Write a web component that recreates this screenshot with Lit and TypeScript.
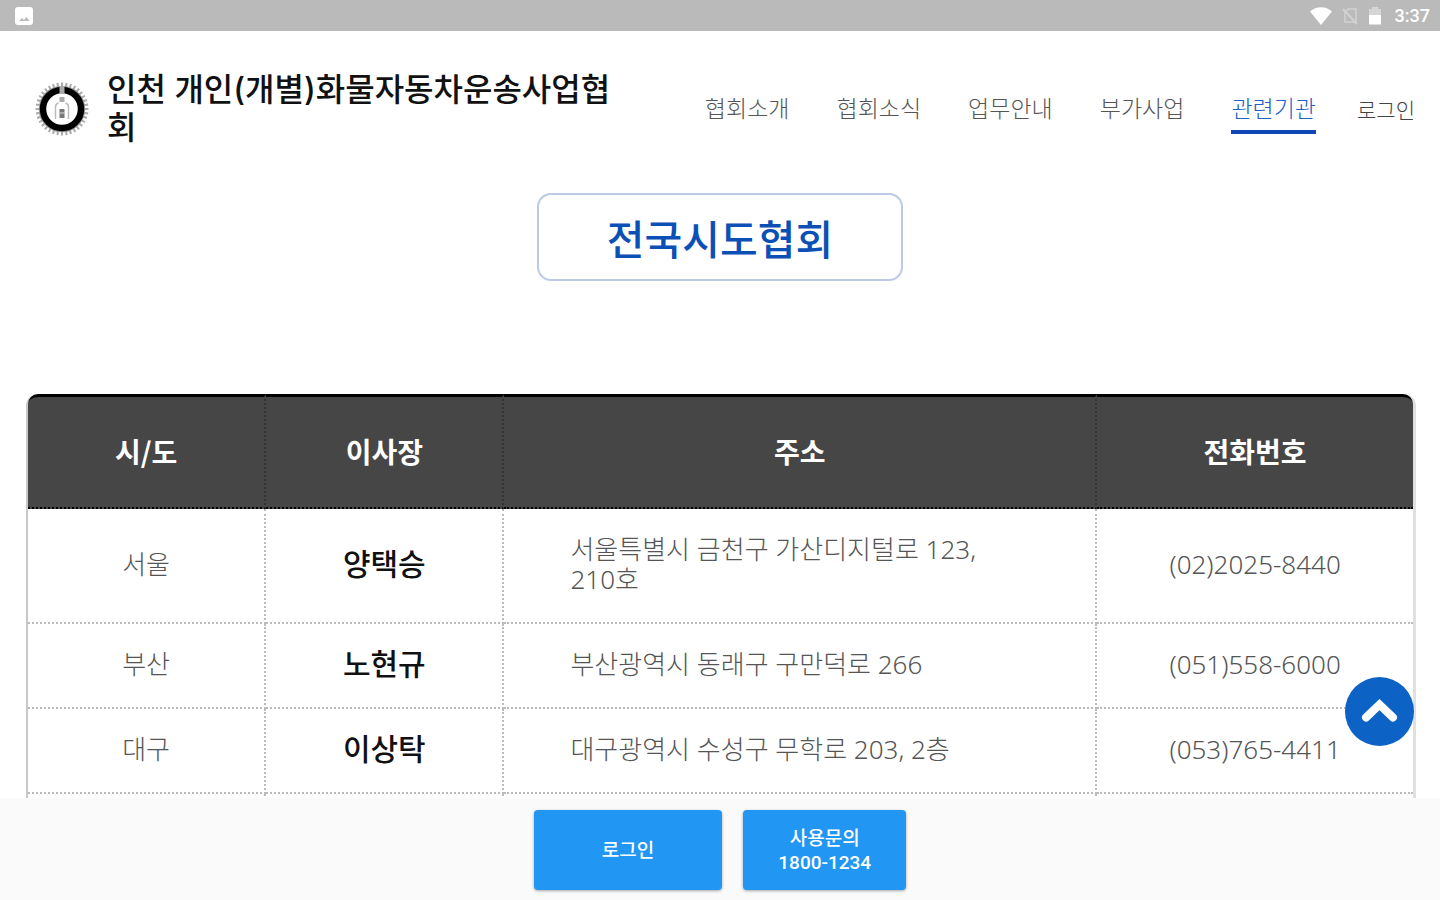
import { LitElement, html, css, svg } from "lit";
import { customElement } from "lit/decorators.js";
import { classMap } from "lit/directives/class-map.js";

interface Association {
  region: string;
  chairman: string;
  address: string;
  phone: string;
}

const MENU = ["협회소개", "협회소식", "업무안내", "부가사업", "관련기관"];
const ACTIVE = "관련기관";

const ASSOCIATIONS: Association[] = [
  { region: "서울", chairman: "양택승", address: "서울특별시 금천구 가산디지털로 123, 210호", phone: "(02)2025-8440" },
  { region: "부산", chairman: "노현규", address: "부산광역시 동래구 구만덕로 266", phone: "(051)558-6000" },
  { region: "대구", chairman: "이상탁", address: "대구광역시 수성구 무학로 203, 2층", phone: "(053)765-4411" },
];

@customElement("status-bar")
export class StatusBar extends LitElement {
  static styles = css`
    :host {
      display: flex;
      align-items: center;
      flex: none;
      height: 31px;
      padding: 0 10px 0 15px;
      background: #bababa;
      color: #fff;
      font: 500 18px/22px Roboto, sans-serif;
    }
    .picture { width: 18px; height: 18px; }
    .right { display: flex; align-items: center; gap: 9px; margin-left: auto; }
    .wifi { width: 22px; height: 18px; }
    .sim { width: 18px; height: 18px; }
    .battery { width: 14px; height: 20px; }
    .time { margin-left: 4px; }
  `;
  render() {
    return html`
      <svg class="picture" viewBox="0 0 18 18" aria-hidden="true">
        <rect width="18" height="18" rx="3" fill="#fff" />
        <path d="M4 14l3-3 2 2 2.500-3 3 4z" fill="#bababa" />
      </svg>
      <div class="right">
        <svg class="wifi" viewBox="0 0 22 18" aria-hidden="true">
          <path d="M0 4.500C6-1.200 16-1.200 22 4.500L11 18z" fill="#fff" />
        </svg>
        <svg class="sim" viewBox="0 0 18 18" aria-hidden="true">
          <path d="M7 2h8v13H4V6z" fill="none" stroke="#d2d2d2" stroke-width="1.500" />
          <path d="M2 2l14 15" stroke="#d2d2d2" stroke-width="2" />
        </svg>
        <svg class="battery" viewBox="0 0 14 20" aria-hidden="true">
          <path d="M4 1h6v2h3v8H1V3h3z" fill="#d6d6d6" />
          <path d="M1 9h12v9.500H1z" fill="#fff" />
        </svg>
        <span class="time">3:37</span>
      </div>
    `;
  }
}

@customElement("site-header")
export class SiteHeader extends LitElement {
  static styles = css`
    :host {
      display: flex;
      align-items: center;
      padding: 40px 25px 0 35px;
    }
    .brand {
      display: flex;
      align-items: center;
      gap: 18px;
      flex: 0 1 592px;
      color: #111;
      text-decoration: none;
    }
    .logo { flex: none; width: 54px; height: 54px; }
    .name {
      font-family: Inter, "Noto Sans CJK KR", sans-serif;
      font-size: 32px;
      line-height: 38px;
      font-weight: 500;
      word-break: break-all;
    }
    .menu { display: flex; align-items: center; gap: 47px; margin-left: auto; }
    .link {
      padding: 4px 0;
      border-bottom: 4px solid transparent;
      color: #555;
      font-size: 23px;
      line-height: 38px;
      font-weight: 300;
      text-decoration: none;
      white-space: nowrap;
    }
    .active { border-color: #0f47b5; color: #2160c4; }
    .login {
      margin-left: 41px;
      color: #444;
      font-size: 21px;
      line-height: 38px;
      font-weight: 300;
      text-decoration: none;
      white-space: nowrap;
    }
  `;
  render() {
    const ring = Array.from({ length: 36 }, (_, i) => i * 10);
    return html`
      <a class="brand" href="#">
        <svg class="logo" viewBox="0 0 54 54" aria-hidden="true">
          ${ring.map(
            (a) => svg`<path d="M27 .5v4.500" stroke="#aaa" stroke-width="2" transform="rotate(${a} 27 27)" />`
          )}
          <circle cx="27" cy="27" r="22.500" fill="none" stroke="#999" stroke-width="1.500" />
          <circle cx="27" cy="27" r="19" fill="none" stroke="#000" stroke-width="6.500" />
          <path d="M24.500 4h5v8h-5z" fill="#aaa" />
          <path d="M24.500 15h5v5h-5z" fill="#aaa" />
          <path d="M20.500 37V25q0-3 3-4M33.500 37V25q0-3-3-4" fill="none" stroke="#bbb" stroke-width="1.500" />
          <path d="M24.500 27h5v9h-5z" fill="#777" />
          <path d="M24.500 31h5" stroke="#ddd" />
        </svg>
        <span class="name">인천 개인(개별)화물자동차운송사업협회</span>
      </a>
      <nav class="menu">
        ${MENU.map(
          (item) => html`<a href="#" class=${classMap({ link: true, active: item === ACTIVE })}>${item}</a>`
        )}
      </nav>
      <a class="login" href="#">로그인</a>
    `;
  }
}

@customElement("association-table")
export class AssociationTable extends LitElement {
  static styles = css`
    :host { display: block; padding: 0 24px 0 26px; }
    .table {
      width: 100%;
      table-layout: fixed;
      border-collapse: separate;
      border-spacing: 0;
      border-left: 2px solid #c8c8c8;
      border-right: 3px solid #e0e0e0;
      border-radius: 12px 12px 0 0;
    }
    .narrow { width: 17.2%; }
    .wide { width: 42.8%; }
    .head {
      height: 115px;
      box-sizing: border-box;
      padding: 0 0 2px;
      background: #464646;
      border-top: 3px solid #000;
      border-bottom: 2px dotted #000;
      border-right: 2px dotted #333;
      color: #fff;
      font-size: 28px;
      line-height: 36px;
      font-weight: 700;
    }
    .head:first-child { border-top-left-radius: 10px; }
    .head:last-child { border-top-right-radius: 10px; border-right: 0; }
    .cell {
      padding: 25px 66px 28px;
      border-bottom: 2px dotted #bbb;
      border-right: 2px dotted #bbb;
      color: #555;
      font-family: "Noto Sans", "Noto Sans CJK KR", sans-serif;
      font-size: 26px;
      line-height: 30px;
      font-weight: 300;
      text-align: left;
      word-break: keep-all;
    }
    .cell:last-child { border-right: 0; }
    .center { padding-left: 0; padding-right: 0; text-align: center; }
    .chairman { color: #111; font-size: 30px; font-weight: 500; }
  `;
  render() {
    return html`
      <table class="table">
        <colgroup>
          <col class="narrow" /><col class="narrow" /><col class="wide" /><col />
        </colgroup>
        <thead>
          <tr>
            <th class="head" scope="col">시/도</th>
            <th class="head" scope="col">이사장</th>
            <th class="head" scope="col">주소</th>
            <th class="head" scope="col">전화번호</th>
          </tr>
        </thead>
        <tbody>
          ${ASSOCIATIONS.map(
            (a) => html`<tr>
              <td class="cell center">${a.region}</td>
              <td class="cell center chairman">${a.chairman}</td>
              <td class="cell">${a.address}</td>
              <td class="cell center">${a.phone}</td>
            </tr>`
          )}
          <tr>
            <td class="cell"></td>
            <td class="cell"></td>
            <td class="cell"></td>
            <td class="cell"></td>
          </tr>
        </tbody>
      </table>
    `;
  }
}

@customElement("action-bar")
export class ActionBar extends LitElement {
  static styles = css`
    :host {
      display: flex;
      justify-content: center;
      gap: 21px;
      flex: none;
      padding: 12px 0 10px;
      background: #fafafa;
    }
    .button {
      height: 80px;
      border: 0;
      border-radius: 4px;
      background: #2196f3;
      box-shadow: 0 1px 3px rgba(0, 0, 0, 0.35);
      color: #fff;
      font: 500 19px/24px Roboto, "Noto Sans CJK KR", sans-serif;
    }
    .login { padding: 2px 68px 0; }
    .contact { padding: 2px 35px 0; }
    .line { display: block; }
  `;
  render() {
    return html`
      <button class="button login">로그인</button>
      <button class="button contact">
        <span class="line">사용문의</span><span class="line">1800-1234</span>
      </button>
    `;
  }
}

@customElement("app-root")
export class AppRoot extends LitElement {
  static styles = css`
    :host {
      display: flex;
      flex-direction: column;
      height: 100vh;
      overflow: hidden;
      background: #fff;
      font-family: "Noto Sans CJK KR", sans-serif;
    }
    .content { position: relative; flex: 1; min-height: 0; overflow: hidden; }
    .title {
      width: fit-content;
      box-sizing: border-box;
      margin: 46px auto 113px;
      padding: 12px 68px;
      border: 2px solid #bccae8;
      border-radius: 14px;
      color: #0c50b6;
      font-size: 41px;
      line-height: 60px;
      font-weight: 500;
    }
    .top {
      position: absolute;
      right: 26px;
      bottom: 52px;
      width: 69px;
      height: 69px;
      padding: 0;
      border: 0;
      border-radius: 50%;
      background: #0d62c6;
    }
    .arrow { display: block; width: 69px; height: 69px; }
  `;
  render() {
    return html`
      <status-bar></status-bar>
      <main class="content">
        <site-header></site-header>
        <h1 class="title">전국시도협회</h1>
        <association-table></association-table>
        <button class="top" aria-label="맨 위로">
          <svg class="arrow" viewBox="0 0 69 69" aria-hidden="true">
            <path d="M21 40.500L34.500 27.500L48 40.500" fill="none" stroke="#fff" stroke-width="8" stroke-linecap="round" />
          </svg>
        </button>
      </main>
      <action-bar></action-bar>
    `;
  }
}
